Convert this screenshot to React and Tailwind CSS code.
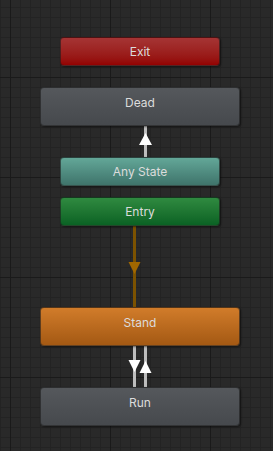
import React from 'react';

// ── Node data (free canvas, positions are the content) ───────────────────────
const NODES = [
  { name: 'Exit',      pos: 'left-[60px] top-[37px] w-[160px] h-[29px] items-center',        bg: 'bg-gradient-to-b from-[#a53434] to-[#930202]' },
  { name: 'Dead',      pos: 'left-[40px] top-[87px] w-[200px] h-[39px] items-start pt-[7px]', bg: 'bg-gradient-to-b from-[#55585c] to-[#46494d]' },
  { name: 'Any State', pos: 'left-[60px] top-[157px] w-[160px] h-[29px] items-center',       bg: 'bg-gradient-to-b from-[#63a798] to-[#3f746b]' },
  { name: 'Entry',     pos: 'left-[60px] top-[197px] w-[160px] h-[29px] items-center',       bg: 'bg-gradient-to-b from-[#2f8a40] to-[#0a6224]' },
  { name: 'Stand',     pos: 'left-[40px] top-[307px] w-[200px] h-[39px] items-start pt-[7px]', bg: 'bg-gradient-to-b from-[#d17c2a] to-[#a45913]' },
  { name: 'Run',       pos: 'left-[40px] top-[387px] w-[200px] h-[39px] items-start pt-[7px]', bg: 'bg-gradient-to-b from-[#55585c] to-[#46494d]' },
];

function Grid() {
  const minor = [];
  for (let i = 0; i < 46; i++) {
    minor.push(<line key={'v' + i} x1={i * 10 + 0.5} y1="0" x2={i * 10 + 0.5} y2="451" />);
    minor.push(<line key={'h' + i} x1="0" y1={i * 10 + 7.5} x2="273" y2={i * 10 + 7.5} />);
  }
  return (
    <svg className="absolute inset-0" width="273" height="451">
      <g stroke="#232323" strokeWidth="1">{minor}</g>
      <g stroke="#1a1a1a" strokeWidth="1">
        {[10, 110, 210].map((x) => <line key={x} x1={x + 0.5} y1="0" x2={x + 0.5} y2="451" />)}
        {[77, 177, 277, 377].map((y) => <line key={y} x1="0" y1={y + 0.5} x2="273" y2={y + 0.5} />)}
      </g>
    </svg>
  );
}

function Links() {
  return (
    <svg className="absolute inset-0" width="273" height="451">
      {/* Any State -> Dead */}
      <line x1="145.5" y1="126" x2="145.5" y2="157" stroke="#bdbdbd" strokeWidth="3" />
      <polygon points="145.5,133 139,145 152,145" fill="#ffffff" />

      {/* Entry -> Stand */}
      <line x1="134.5" y1="226" x2="134.5" y2="307" stroke="#7c5200" strokeWidth="3" />
      <polygon points="128.5,262 140.5,262 134.5,274" fill="#a06700" />

      {/* Stand <-> Run */}
      <line x1="134.5" y1="346" x2="134.5" y2="387" stroke="#bdbdbd" strokeWidth="3" />
      <line x1="145.5" y1="346" x2="145.5" y2="387" stroke="#bdbdbd" strokeWidth="3" />
      <polygon points="128.5,360 140.5,360 134.5,372" fill="#ffffff" />
      <polygon points="145.5,361 139.5,373 151.5,373" fill="#ffffff" />
    </svg>
  );
}

export default function App() {
  return (
    <div className="relative w-full h-[451px] overflow-hidden bg-[#292929] font-['Inter','Noto_Sans',sans-serif]">
      <Grid />
      <Links />
      {NODES.map((n) => (
        <div
          key={n.name}
          className={`absolute flex justify-center rounded-[4px] border border-[#1c1c1c]/60 shadow-[1px_1px_2px_rgba(0,0,0,0.5)] text-[12px] leading-[16px] text-[#dcdcdc] ${n.bg} ${n.pos}`}
        >
          {n.name}
        </div>
      ))}
    </div>
  );
}
